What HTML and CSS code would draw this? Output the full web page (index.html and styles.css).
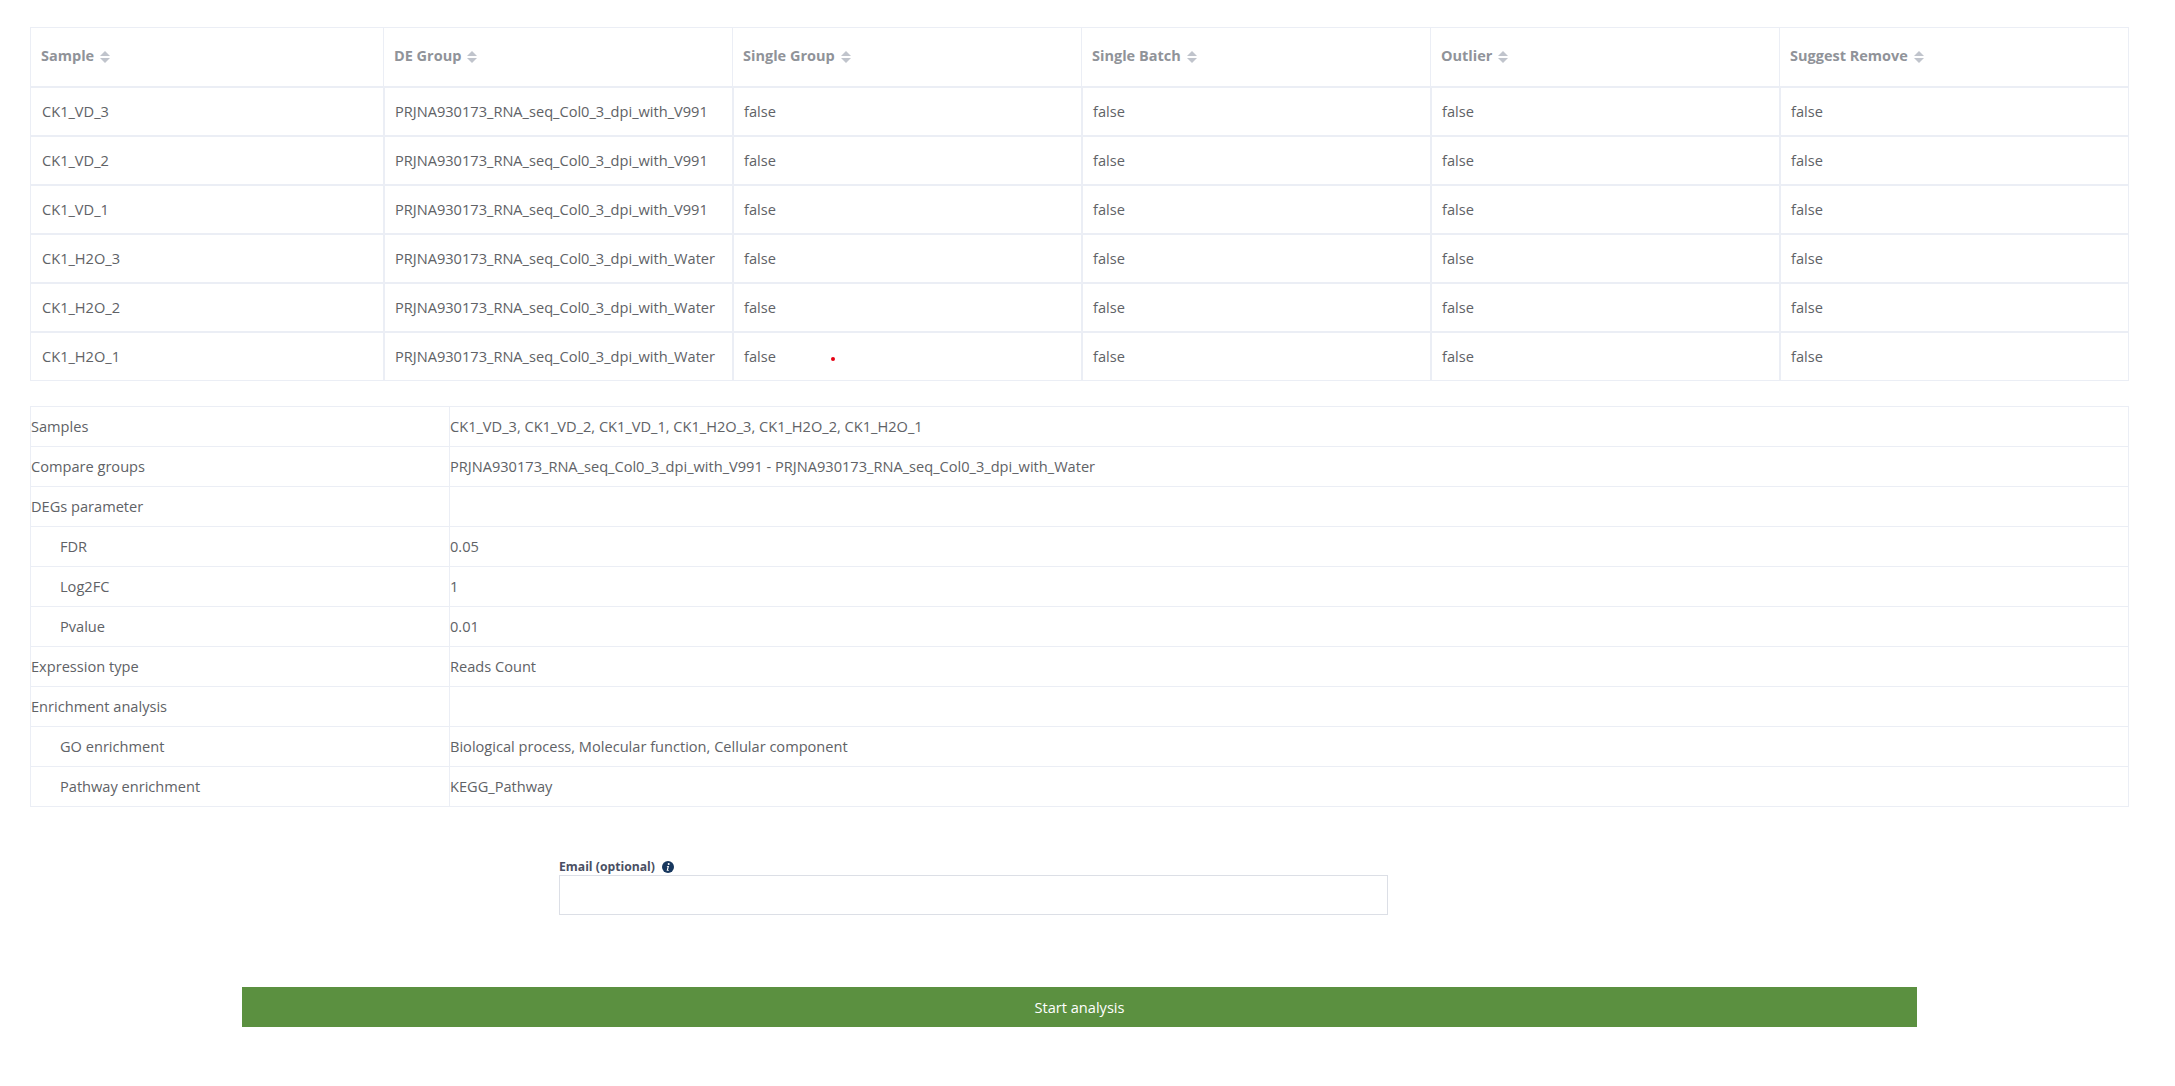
FILE: index.html
```html
<!DOCTYPE html>
<html lang="en">
<head>
<meta charset="utf-8">
<title>Start analysis</title>
<link rel="stylesheet" href="styles.css">
</head>
<body>
<main class="page">
  <table class="samples">
    <colgroup><col class="col-first"><col><col><col><col><col></colgroup>
    <thead>
      <tr>
        <th>Sample<span class="caret"></span></th>
        <th>DE Group<span class="caret"></span></th>
        <th>Single Group<span class="caret"></span></th>
        <th>Single Batch<span class="caret"></span></th>
        <th>Outlier<span class="caret"></span></th>
        <th>Suggest Remove<span class="caret"></span></th>
      </tr>
    </thead>
    <tbody>
      <tr><td>CK1_VD_3</td><td>PRJNA930173_RNA_seq_Col0_3_dpi_with_V991</td><td>false</td><td>false</td><td>false</td><td>false</td></tr>
      <tr><td>CK1_VD_2</td><td>PRJNA930173_RNA_seq_Col0_3_dpi_with_V991</td><td>false</td><td>false</td><td>false</td><td>false</td></tr>
      <tr><td>CK1_VD_1</td><td>PRJNA930173_RNA_seq_Col0_3_dpi_with_V991</td><td>false</td><td>false</td><td>false</td><td>false</td></tr>
      <tr><td>CK1_H2O_3</td><td>PRJNA930173_RNA_seq_Col0_3_dpi_with_Water</td><td>false</td><td>false</td><td>false</td><td>false</td></tr>
      <tr><td>CK1_H2O_2</td><td>PRJNA930173_RNA_seq_Col0_3_dpi_with_Water</td><td>false</td><td>false</td><td>false</td><td>false</td></tr>
      <tr><td>CK1_H2O_1</td><td>PRJNA930173_RNA_seq_Col0_3_dpi_with_Water</td><td class="has-dot">false<span class="red-dot"></span></td><td>false</td><td>false</td><td>false</td></tr>
    </tbody>
  </table>

  <table class="summary">
    <colgroup><col class="col-key"><col></colgroup>
    <tbody>
      <tr><td>Samples</td><td>CK1_VD_3, CK1_VD_2, CK1_VD_1, CK1_H2O_3, CK1_H2O_2, CK1_H2O_1</td></tr>
      <tr><td>Compare groups</td><td>PRJNA930173_RNA_seq_Col0_3_dpi_with_V991 - PRJNA930173_RNA_seq_Col0_3_dpi_with_Water</td></tr>
      <tr><td>DEGs parameter</td><td></td></tr>
      <tr><td class="indent">FDR</td><td>0.05</td></tr>
      <tr><td class="indent">Log2FC</td><td>1</td></tr>
      <tr><td class="indent">Pvalue</td><td>0.01</td></tr>
      <tr><td>Expression type</td><td>Reads Count</td></tr>
      <tr><td>Enrichment analysis</td><td></td></tr>
      <tr><td class="indent">GO enrichment</td><td>Biological process, Molecular function, Cellular component</td></tr>
      <tr><td class="indent">Pathway enrichment</td><td>KEGG_Pathway</td></tr>
    </tbody>
  </table>

  <form class="email-form">
    <label class="email-label" for="email">Email (optional)
      <svg class="info-icon" viewBox="0 0 12 12" width="12" height="12" aria-hidden="true">
        <circle cx="6" cy="6" r="6" fill="#17375e"/>
        <circle cx="6.7" cy="3" r="1" fill="#fff"/>
        <path d="M5 5h2l-1 4h.9l-.2.8H4.6L5.6 5.8H4.8z" fill="#fff"/>
      </svg>
    </label>
    <input class="email-input" id="email" type="text">
  </form>

  <button class="start" type="button">Start analysis</button>
</main>
</body>
</html>
```

FILE: styles.css
```css
* { box-sizing: border-box; }
html, body { margin: 0; background: #fff; }
body {
  font-family: "Open Sans", "Noto Sans", sans-serif;
  font-size: 14.6px;
  color: #606266;
}
.page {
  display: flex;
  flex-direction: column;
  padding: 27px 46px 0 30px;
  height: 1086px;
  overflow: hidden;
}
table {
  width: 100%;
  table-layout: fixed;
  border-collapse: separate;
  border-spacing: 0;
}
.col-first { width: 354px; }
.col-key { width: 420px; }

.samples th {
  height: 60px;
  padding: 0 10px 4px;
  text-align: left;
  font-size: 14.5px;
  font-weight: 700;
  color: #909399;
  border-top: 1px solid #ebeef5;
  border-right: 1px solid #ebeef5;
  border-bottom: 1px solid #ebeef5;
}
.samples th:first-child { border-left: 1px solid #ebeef5; }
.samples td {
  height: 49px;
  padding: 0 10px 2px;
  border: 1px solid #ebeef5;
  white-space: nowrap;
}
.samples td:first-child { padding-left: 11px; }
.has-dot { position: relative; }
.red-dot {
  position: absolute;
  left: 97px;
  top: 24px;
  width: 4px;
  height: 4px;
  border-radius: 50%;
  background: #e60012;
}
.caret {
  display: inline-block;
  position: relative;
  width: 10px;
  height: 12px;
  margin-left: 6px;
  vertical-align: -2px;
}
.caret::before,
.caret::after {
  content: "";
  position: absolute;
  left: 0;
  border-left: 5px solid transparent;
  border-right: 5px solid transparent;
}
.caret::before { top: 0; border-bottom: 5px solid #c0c4cc; }
.caret::after { bottom: 0; border-top: 5px solid #c0c4cc; }

.summary { margin-top: 25px; }
.summary td {
  height: 40px;
  padding: 0 0 2px;
  border-top: 1px solid #ebeef5;
  border-right: 1px solid #ebeef5;
  white-space: nowrap;
}
.summary tr:last-child td {
  height: 41px;
  border-bottom: 1px solid #ebeef5;
}
.summary td:first-child { border-left: 1px solid #ebeef5; }
.summary td.indent { padding-left: 29px; }

.email-form {
  display: flex;
  flex-direction: column;
  width: 829px;
  margin: 51px 0 0 529px;
}
.email-label {
  display: flex;
  align-items: center;
  gap: 7px;
  height: 17px;
  font-size: 12.2px;
  font-weight: 700;
  color: #4a4f63;
}
.info-icon { flex: none; }
.email-input {
  height: 40px;
  border: 1px solid #dcdfe6;
  outline: 0;
  background: #fff;
}
.start {
  align-self: flex-start;
  width: 1675px;
  height: 40px;
  margin: 72px 0 0 212px;
  border: 0;
  background: #5b9040;
  color: #fff;
  font: inherit;
}
```
